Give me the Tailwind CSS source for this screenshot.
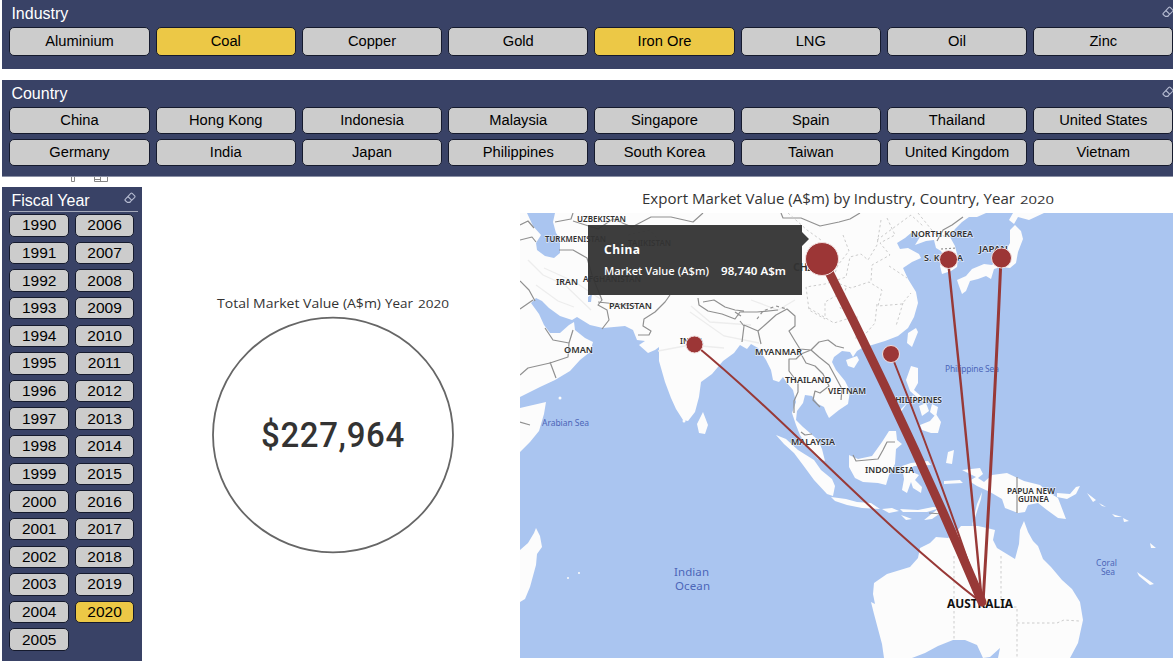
<!DOCTYPE html>
<html lang="en">
<head>
<meta charset="utf-8">
<title>Export Market Value</title>
<script src="https://cdn.jsdelivr.net/npm/@tailwindcss/browser@4"></script>
</head>
<body class="w-[1173px] h-[661px] overflow-hidden bg-white font-['Liberation_Sans',sans-serif] text-black">
<svg class="hidden">
  <symbol id="eraser" viewBox="0 0 12 12"><path d="M1.200 7.300 6.800 1.400Q7.500.8 8.200 1.400L10.700 3.900Q11.300 4.600 10.700 5.300L5.500 10.400H3.400L1.200 8.500Q.7 7.900 1.200 7.300ZM3.900 4.500 7.900 8.300M3.400 10.500H6.500" fill="none" stroke="#b4bad0" stroke-width="1.100"/></symbol>
</svg>

<header class="ml-[2px] h-[69px] w-[1171px] overflow-hidden bg-[#394266] pl-[7.400px] pt-[4px]">
  <div class="flex h-[22.500px] justify-between pl-[2px]">
    <h2 class="text-[16px] leading-[20px] text-white">Industry</h2>
    <svg class="mt-[2px] -mr-px h-[12px] w-[12px]"><use href="#eraser"/></svg>
  </div>
  <div id="industry" class="grid w-[1164px] grid-cols-8 gap-x-[6px]"></div>
</header>

<section class="ml-[2px] mt-[11px] h-[97px] w-[1171px] overflow-hidden border-b border-[#8a90a5] bg-[#394266] pl-[7.400px] pt-[4px]">
  <div class="flex h-[22.500px] justify-between pl-[2px]">
    <h2 class="text-[16px] leading-[20px] text-white">Country</h2>
    <svg class="mt-[2px] -mr-px h-[12px] w-[12px]"><use href="#eraser"/></svg>
  </div>
  <div id="country" class="grid w-[1164px] grid-cols-8 gap-x-[6px] gap-y-[5px]"></div>
</section>

<svg class="ml-[70px] block h-[10px] w-[40px]" viewBox="70 177 40 10" fill="none" stroke="#858585"><path d="M71.500 177V181.500H74.500V177M94.500 177V181.500H107.500V177M100.500 177V181.500M94.500 179.500H100.500"/></svg>

<main class="flex h-[474px] pl-[2px]">
  <aside class="h-[474px] w-[140px] shrink-0 bg-[#394266] pl-[7.400px] pr-[4px]">
    <div class="flex h-[25px] justify-between border-b border-[#a4a9bb] pl-[2px] pt-[4px]">
      <h2 class="text-[16px] leading-[20px] text-white">Fiscal Year</h2>
      <svg class="mr-[2px] mt-[1px] h-[12px] w-[12px]"><use href="#eraser"/></svg>
    </div>
    <div id="years" class="mt-[2px] grid w-[125px] grid-flow-col grid-cols-2 grid-rows-[repeat(16,27.63px)] gap-x-[5.600px]"></div>
  </aside>

  <section class="flex w-[378px] shrink-0 flex-col items-center pl-[3px] pt-[105px]">
    <svg class="h-[24px] w-[240px]" viewBox="0 0 240 24" fill="#333"><text x="4" y="16" font-family="Open Sans" font-size="13.300" textLength="164" lengthAdjust="spacingAndGlyphs">Total Market Value (A$m)</text><text x="172" y="16" font-family="Open Sans" font-size="13.300" textLength="28" lengthAdjust="spacingAndGlyphs">Year</text><text x="205" y="16" font-family="Open Sans" font-size="10.400" textLength="31" lengthAdjust="spacingAndGlyphs">2020</text></svg>
    <svg class="h-[238px] w-[244px]" viewBox="0 0 244 238"><ellipse cx="122" cy="119" rx="120" ry="117.300" fill="none" stroke="#666" stroke-width="1.800"/><g transform="translate(50 130.500) scale(.93 1)"><text x="0" y="0" font-family="Roboto" font-weight="500" font-size="35.500" fill="#333" textLength="154" lengthAdjust="spacing">$227,964</text></g></svg>
  </section>

  <section class="flex w-[653px] flex-col">
    <svg class="h-[26px] w-[653px]" viewBox="520 187 653 26" fill="#333" font-family="Open Sans"><text x="642" y="204" font-size="15" textLength="373" lengthAdjust="spacingAndGlyphs">Export Market Value (A$m) by Industry, Country, Year</text><text x="1020" y="204" font-size="11.500" textLength="34" lengthAdjust="spacingAndGlyphs">2020</text></svg>
    <svg class="h-[445px] w-[653px] bg-[#aac5f0]" viewBox="520 213 653 445">
      <!-- land -->
      <g fill="#fcfcfc">
        <path d="M520 213H986L977 217 969 217 962 222 955 229 950 237 955 246 958 258 957 267 951 271 942 274 940 266 944 257 941 251 936 248 934 240 926 241 915 245 920 237 911 233 905 238 897 243 900 249 908 248 919 254 921 258 912 262 903 268 908 279 916 292 918 303 914 317 908 328 898 336 885 341 872 345 862 348 857 351 853 357 850 352 842 351 834 357 832 362 836 370 845 381 850 391 848 404 839 410 829 418 826 412 824 407 818 404 812 396 805 395 803 403 797 411 796 420 803 427 810 433 818 440 822 449 825 461 818 459 811 451 805 443 800 435 796 425 792 413 796 402 793 390 787 383 783 377 779 382 773 380 771 370 766 360 758 348 751 344 747 349 740 345 734 353 723 361 712 374 701 382 699 397 695 412 688 421 683 420 676 409 671 398 665 382 659 361 659 347 655 350 648 353 639 345 645 341 637 340 633 330 625 326 603 328 590 325 577 317 572 320 560 316 549 308 542 301 536 298 531 303 539 314 544 325 550 333 560 333 569 325 574 322 575 330 585 338 593 342 590 352 580 360 570 371 555 380 540 387 520 397Z"/>
        <path d="M520 408 546 402 544 414 539 431 530 442 520 452ZM520 550 528 543 534 533 536 528 540 536 542 547 537 554 536 565 530 587 525 599 520 602Z"/>
        <path d="M1015 225 1021 231 1023 239 1018 252 1016 263 1010 268 1001 267 994 269 991 279 986 276 978 279 970 281 966 291 962 294 959 286 957 280 966 276 972 269 984 264 992 265 1003 255 1010 243 1010 230ZM1013 213H1044L1029 220 1018 217 1014 224 1009 220ZM916 328 918 332 912 347 907 343 908 333ZM857 356 859 360 854 368 848 366 846 360Z"/>
        <path d="M697 424 703 412 708 425 705 434 699 433ZM911 366 918 368 918 383 914 390 922 397 927 402 921 401 910 391 906 380ZM919 406 926 403 929 411 922 416ZM908 402 898 416 900 410ZM932 404 938 407 936 417 930 412ZM920 425 930 421 936 414 941 422 938 433 931 433 922 430ZM913 395 917 400 911 399Z"/>
        <path d="M776 435 786 439 798 450 814 460 821 470 832 479 835 486 833 496 827 494 814 480 803 465 794 453 784 444ZM831 497 846 499 857 502 871 503 880 509 862 508 847 505 835 501ZM849 455 858 459 872 456 882 442 889 431 896 431 897 440 902 444 896 449 895 464 889 475 886 485 878 483 863 482 855 478 849 467ZM902 466 911 463 928 461 931 465 914 466 908 470 919 475 915 480 922 487 921 493 913 488 911 482 907 493 902 490 904 479ZM882 509 892 508 899 511 889 513ZM900 509 918 510 933 507 940 508 927 512 903 512ZM901 515 912 519 906 520ZM924 520 939 508 942 512 932 519ZM948 452 954 450 952 464 946 463ZM944 481 960 480 963 483 944 484Z"/>
        <path d="M962 470 980 468 983 474 978 478 984 482 992 475 1007 473 1024 481 1040 485 1048 492 1058 498 1066 519 1058 518 1047 510 1038 503 1028 505 1025 512 1018 513 1005 508 1002 499 990 492 977 486 969 481 976 477ZM1057 493 1070 494 1076 487 1080 486 1076 494 1067 499 1057 497ZM1087 493 1096 500 1093 502ZM1099 503 1106 507 1102 506ZM1112 514 1122 517 1115 517ZM1123 518 1129 521 1124 522ZM1137 572 1154 584 1150 585 1139 576ZM1150 543 1156 548 1151 548ZM971 530 981 499 982 492 977 504Z"/>
        <path d="M884 658 882 644 874 614 871 602 875 604 873 594 874 583 887 574 910 567 918 558 920 548 930 543 936 537 948 538 956 532 961 526 978 526 987 528 995 530 993 540 997 548 1015 559 1019 544 1020 530 1024 521 1028 532 1033 541 1038 546 1043 559 1051 567 1062 580 1072 589 1080 602 1083 620 1078 643 1070 658H998L1000 648 990 657 983 658 977 645 965 640 953 640 938 646 925 653 912 658Z"/>
        <circle cx="568" cy="578" r="1"/><circle cx="579" cy="573" r="1"/><circle cx="560" cy="398" r="1.500"/><circle cx="684" cy="421" r="1.500"/>
      </g>
      <path d="M527 213H555L553 222 556 233 560 239 560 253 554 258 545 256 537 250 536 243 541 235 533 226ZM588 297 592 294 591 302 588 302Z" fill="#aac5f0"/>
      <!-- terrain -->
      <g fill="none" stroke="#ededed" stroke-width="1.300"><path d="M528 260 543 275 565 285 591 310M544 268 575 282 602 300M536 285 558 301 574 307M690 312 724 336 759 343M658 351 690 345 724 348M691 306 710 322 751 325M751 300 778 310 795 300"/></g>
      <!-- borders -->
      <g fill="none" stroke="#909090" stroke-width="1.200" stroke-linejoin="round">
        <path d="M520 225 528 221 534 228M520 240 532 237 536 242M555 222 571 219 573 213M573 221 598 229 613 219 632 227 651 217 671 217 693 222 703 213M559 250 573 250 587 258 593 278 602 300 598 305 607 310 609 320 602 329M520 281 529 290 535 301M520 309 533 300M598 302 635 306M670 295 665 302 655 312 644 319 643 326 651 331 649 335 638 335M545 328 553 340 569 343 573 330M569 343 568 357 550 363 528 368 520 375M550 362 556 378M698 298 699 305 708 311 722 314 735 319 740 312 757 312 778 310M703 302 714 300 725 307 735 310 744 311M735 312 741 316M740 321 744 326 742 342M744 325 758 331 761 344M758 331 766 324 776 315 787 309 795 316 795 326 789 331 795 341 800 349 811 350 801 354 796 359 789 359 789 371 798 383 798 392 794 401 794 413M811 350 819 342 828 340 836 346 844 348M811 350 819 357 829 365 835 376 842 389 841 400M801 354 806 363 815 366 823 374 829 386 820 393 815 391 813 400 820 407M781 213 783 218 801 218 820 226 839 222 850 219 860 213M801 432 805 435 812 434M853 455 856 461 878 459 883 450 887 442 895 442M1017 477V513M929 513 942 514M520 422 530 425"/>
        <path d="M757 319 763 311 776 306 787 309" stroke-dasharray="3 3"/><path d="M963 217 952 225 943 230 937 241"/><path d="M941 249 957 248" stroke-dasharray="2 2"/>
      </g>
      <g fill="none" stroke="#cccccc" stroke-width="1" stroke-dasharray="2.500 2.500"><path d="M788 213 807 230 821 240M881 220 877 245 868 260 861 254 850 257 846 277 825 284 806 287 809 310 825 319 825 302 841 293M887 218 895 235 880 243 890 255 872 265 871 281M843 235 849 251 838 265 832 281 851 288 869 282 882 290 878 306 902 304 911 293M846 288 840 308 857 316 856 339M877 304 875 323 862 338M903 303 896 326M809 308 834 323 853 317M954 556V641M1001 556V606M954 607H1017V658M1017 623H1057L1064 620 1079 621M877 240 896 226 911 215 923 226M918 213 935 234 948 237M889 266 907 278M628 235 650 230 660 242"/></g>
      <!-- place labels -->
      <g font-family="Noto Sans" font-weight="600" font-size="9.500" fill="#303030" stroke="#fff" stroke-width="1.400" stroke-opacity=".6" paint-order="stroke">
        <text x="577" y="222" textLength="49" lengthAdjust="spacingAndGlyphs">UZBEKISTAN</text><text x="545" y="242" textLength="61" lengthAdjust="spacingAndGlyphs">TURKMENISTAN</text><text x="556" y="285" textLength="22" lengthAdjust="spacingAndGlyphs">IRAN</text><text x="583" y="282" textLength="58" lengthAdjust="spacingAndGlyphs">AFGHANISTAN</text><text x="628" y="246" textLength="43" lengthAdjust="spacingAndGlyphs">TAJIKISTAN</text><text x="609" y="309" textLength="43" lengthAdjust="spacingAndGlyphs">PAKISTAN</text><text x="564" y="353" textLength="29" lengthAdjust="spacingAndGlyphs">OMAN</text><text x="680" y="343.500" textLength="23" lengthAdjust="spacingAndGlyphs">INDIA</text><text x="755" y="355" textLength="47" lengthAdjust="spacingAndGlyphs">MYANMAR</text><text x="785" y="382.500" textLength="46" lengthAdjust="spacingAndGlyphs">THAILAND</text><text x="828" y="393.500" textLength="38" lengthAdjust="spacingAndGlyphs">VIETNAM</text><text x="890" y="403" textLength="52" lengthAdjust="spacingAndGlyphs">PHILIPPINES</text><text x="791" y="445" textLength="44" lengthAdjust="spacingAndGlyphs">MALAYSIA</text><text x="865" y="472.500" textLength="49" lengthAdjust="spacingAndGlyphs">INDONESIA</text><text x="911" y="237" textLength="62" lengthAdjust="spacingAndGlyphs">NORTH KOREA</text><text x="924" y="261" textLength="39" lengthAdjust="spacingAndGlyphs">S. KOREA</text><text x="979" y="251.500" textLength="29" lengthAdjust="spacingAndGlyphs">JAPAN</text><text x="1007" y="494" textLength="48" lengthAdjust="spacingAndGlyphs">PAPUA NEW</text><text x="1018" y="502" textLength="31" lengthAdjust="spacingAndGlyphs">GUINEA</text>
        <text x="793" y="271" font-size="11" font-weight="700" textLength="34">CHINA</text><text x="947" y="608" font-size="11.500" font-weight="700" fill="#111" textLength="66" lengthAdjust="spacingAndGlyphs">AUSTRALIA</text>
      </g>
      <g font-family="Noto Sans" font-size="8.500" fill="#4c66b8"><text x="542" y="425.500" textLength="47">Arabian Sea</text><text x="945" y="372" textLength="54">Philippine Sea</text><text x="1096" y="565.500" textLength="21">Coral</text><text x="1101" y="574.500" textLength="14">Sea</text><text x="674" y="575.500" font-size="11.500" textLength="35">Indian</text><text x="675" y="589.500" font-size="11.500" textLength="35">Ocean</text></g>
      <!-- trade flows -->
      <g fill="none" stroke="#983937" stroke-linecap="round"><path d="M694 344C790 423 880 525 982 603" stroke-width="2"/><path d="M891 354Q945 490 982 603" stroke-width="2"/><path d="M948 260Q966 430 982 603" stroke-width="2.400"/><path d="M1001 258Q994 420 983 603" stroke-width="3"/><path d="M824 262Q909 430 982 602" stroke-width="9"/></g>
      <g fill="#9c3636" stroke="#f1dddd"><circle cx="822" cy="259" r="16.500"/><circle cx="694.500" cy="344.500" r="8.500"/><circle cx="891" cy="354" r="8.500"/><circle cx="948.500" cy="259.500" r="9"/><circle cx="1001.500" cy="258" r="10"/></g>
      <!-- tooltip -->
      <path d="M588 225H802V232L809 239 802 246V295H588Z" fill="#333" fill-opacity=".95"/>
      <g font-family="Noto Sans" fill="#fff"><text x="604" y="254" font-size="12" font-weight="700" textLength="36">China</text><text x="604" y="275" font-size="11.500" font-weight="500" textLength="105" lengthAdjust="spacingAndGlyphs">Market Value (A$m)</text><text x="721" y="275" font-size="11.500" font-weight="600" textLength="65" lengthAdjust="spacingAndGlyphs">98,740 A$m</text></g>
    </svg>
  </section>
</main>

<script>
const grey = 'bg-[#cccccc]', gold = 'bg-[#ecc846]';
function fill(id, items, cls, selected) {
  document.getElementById(id).innerHTML = items.map(t =>
    `<button class="block rounded-[5px] border border-[#151a2d] ${selected.includes(t) ? gold : grey} ${cls}">${t}</button>`).join('');
}
fill('industry', ['Aluminium','Coal','Copper','Gold','Iron Ore','LNG','Oil','Zinc'], 'h-[29.5px] pb-[1px] text-[14.7px] leading-[24px] whitespace-nowrap', ['Coal','Iron Ore']);
fill('country', ['China','Hong Kong','Indonesia','Malaysia','Singapore','Spain','Thailand','United States','Germany','India','Japan','Philippines','South Korea','Taiwan','United Kingdom','Vietnam'], 'h-[27px] pb-[1px] text-[14.7px] leading-[22px] whitespace-nowrap', []);
fill('years', Array.from({length: 31}, (_, i) => String(1990 + i)), 'h-[22.5px] text-[15.5px] leading-[18px]', ['2020']);
</script>
</body>
</html>
